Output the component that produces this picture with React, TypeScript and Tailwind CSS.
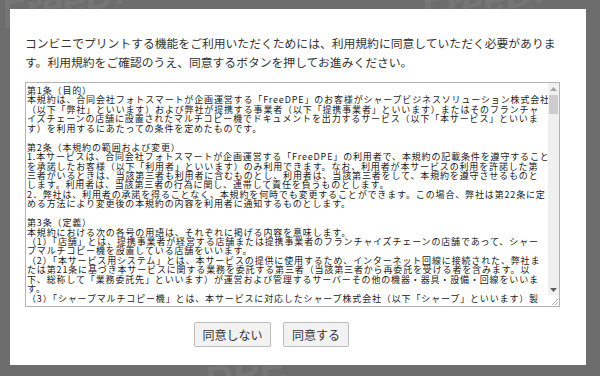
import React from 'react';

const termsLines: string[] = [
  '第1条（目的）',
  '本規約は、合同会社フォトスマートが企画運営する「FreeDPE」のお客様がシャープビジネスソリューション株式会社',
  '（以下「弊社」といいます）および弊社が提携する事業者（以下「提携事業者」といいます）またはそのフランチャ',
  'イズチェーンの店舗に設置されたマルチコピー機でドキュメントを出力するサービス（以下「本サービス」といいま',
  'す）を利用するにあたっての条件を定めたものです。',
  '',
  '第2条（本規約の範囲および変更）',
  '1.本サービスは、合同会社フォトスマートが企画運営する「FreeDPE」の利用者で、本規約の記載条件を遵守すること',
  'を承諾したお客様（以下「利用者」といいます）のみ利用できます。なお、利用者が本サービスの利用を許諾した第',
  '三者がいるときは、当該第三者も利用者に含むものとし、利用者は、当該第三者をして、本規約を遵守させるものと',
  'します。利用者は、当該第三者の行為に関し、連帯して責任を負うものとします。',
  '2．弊社は、利用者の承諾を得ることなく、本規約を何時でも変更することができます。この場合、弊社は第22条に定',
  'める方法により変更後の本規約の内容を利用者に通知するものとします。',
  '',
  '第3条（定義）',
  '本規約における次の各号の用語は、それぞれに掲げる内容を意味します。',
  '（1）「店舗」とは、提携事業者が経営する店舗または提携事業者のフランチャイズチェーンの店舗であって、シャー',
  'プマルチコピー機を設置している店舗をいいます。',
  '（2）「本サービス用システム」とは、本サービスの提供に使用するため、インターネット回線に接続された、弊社ま',
  'たは第21条に基づき本サービスに関する業務を委託する第三者（当該第三者から再委託を受ける者を含みます。以',
  '下、総称して「業務委託先」といいます）が運営および管理するサーバーその他の機器・器具・設備・回線をいいま',
  'す。',
  '（3）「シャープマルチコピー機」とは、本サービスに対応したシャープ株式会社（以下「シャープ」といいます）製',
];

// faint diagonal "FreeDPE" marks on the dimmed backdrop
const Watermark: React.FC<{ className: string }> = ({ className }) => (
  <span
    className={`absolute select-none whitespace-nowrap font-bold italic text-[#767676] text-[40px] leading-none ${className}`}
    style={{ fontFamily: '"Liberation Sans", sans-serif' }}
  >
    FreeDPE
  </span>
);

const FakeScrollbar: React.FC = () => (
  <div className="w-[11px] flex flex-col bg-[#f0f0f0]">
    <div className="h-[11px] flex items-center justify-center">
      <svg width="7" height="4" viewBox="0 0 7 4">
        <path d="M3.5 0 L7 4 L0 4 Z" fill="#a3a3a3" />
      </svg>
    </div>
    <div className="flex-1 px-[1px] pt-[1px]">
      <div className="h-[19px] bg-[#cdcdcd]" />
    </div>
    <div className="h-[11px] flex items-center justify-center">
      <svg width="7" height="4" viewBox="0 0 7 4">
        <path d="M0 0 L7 0 L3.5 4 Z" fill="#606060" />
      </svg>
    </div>
    <div className="h-[11px] bg-white flex items-end justify-end">
      <svg width="9" height="9" viewBox="0 0 9 9">
        <path d="M8 2 L2 8 M8 5 L5 8" stroke="#b0b0b0" strokeWidth="1" />
      </svg>
    </div>
  </div>
);

export default function App() {
  return (
    <div
      className="w-[600px] h-[376px] bg-[#6d6d6d] relative overflow-hidden"
      style={{ fontFamily: '"Noto Sans CJK JP", "Noto Sans", sans-serif' }}
    >
      <Watermark className="left-[0px] top-[-22px] -rotate-[12deg]" />
      <Watermark className="left-[420px] top-[-24px] -rotate-[12deg]" />
      <Watermark className="left-[120px] top-[362px] -rotate-[12deg]" />

      <div className="relative pt-[9px] pl-[10px]">
        <div className="w-[576px] h-[356px] bg-white pt-[24px] pl-[15px]">
          <p className="text-[11.8px] leading-[19px] text-[#333333] whitespace-nowrap">
            コンビニでプリントする機能をご利用いただくためには、利用規約に同意していただく必要がありま
            <br />
            す。利用規約をご確認のうえ、同意するボタンを押してお進みください。
          </p>

          <div className="mt-[11px] w-[535px] h-[225px] border border-[#b4b4b4] flex bg-white">
            <div className="flex-1 overflow-hidden pl-[1px] pt-[3px] text-[9px] tracking-[0.85px] leading-[9.45px] text-[#1a1a1a] whitespace-pre">
              {termsLines.map((line, i) => (
                <div key={i} className="h-[9.45px]">
                  {line}
                </div>
              ))}
            </div>
            <FakeScrollbar />
          </div>

          <div className="flex gap-[12px] mt-[15px] pl-[169px]">
            <button className="w-[77px] h-[25px] border border-[#bcbcbc] rounded-[2px] bg-[#f2f2f2] text-[12px] text-[#333333]">
              同意しない
            </button>
            <button className="w-[66px] h-[25px] border border-[#bcbcbc] rounded-[2px] bg-[#f2f2f2] text-[12px] text-[#333333]">
              同意する
            </button>
          </div>
        </div>
      </div>
    </div>
  );
}
